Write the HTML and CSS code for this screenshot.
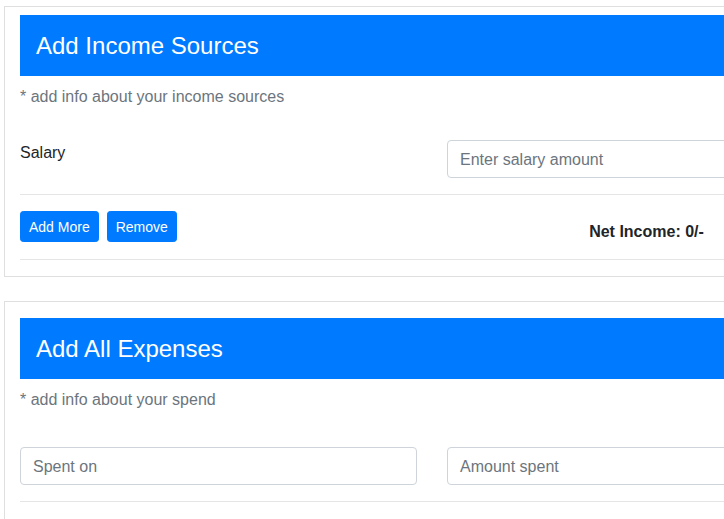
FILE: index.html
```html
<!DOCTYPE html>
<html lang="en">
<head>
<meta charset="utf-8">
<title>Budget</title>
<link rel="stylesheet" href="styles.css">
</head>
<body>
<div class="page">
  <section class="card card-income">
    <h4 class="card-title">Add Income Sources</h4>
    <p class="note">* add info about your income sources</p>
    <div class="row row-income">
      <div class="label">Salary</div>
      <input class="field" type="text" placeholder="Enter salary amount">
    </div>
    <hr class="divider">
    <div class="row">
      <div class="buttons">
        <button class="btn" type="button">Add More</button>
        <button class="btn" type="button">Remove</button>
      </div>
      <div class="net">Net Income: 0/-</div>
    </div>
    <hr class="divider">
  </section>
  <section class="card card-expenses">
    <h4 class="card-title">Add All Expenses</h4>
    <p class="note">* add info about your spend</p>
    <div class="row row-expenses">
      <input class="field" type="text" placeholder="Spent on">
      <input class="field" type="text" placeholder="Amount spent">
    </div>
    <hr class="divider">
  </section>
</div>
</body>
</html>
```
FILE: styles.css
```css
html {
  overflow: hidden;
}
body {
  margin: 0;
  font-family: "Liberation Sans", Arial, sans-serif;
  font-size: 16px;
  line-height: 1.5;
  color: #212529;
  background: #fff;
}
.page {
  padding: 6px 0 0 4px;
  width: 860px;
}
.card {
  box-sizing: border-box;
  width: 856px;
  border: 1px solid rgba(0, 0, 0, 0.125);
  padding: 8px 15px 0;
  margin-bottom: 24px;
}
.card-expenses {
  padding-top: 16px;
  padding-bottom: 24px;
}
.card-title {
  margin: 0 0 8px;
  padding: 17px 16px 15px;
  background: #007bff;
  color: #fff;
  font-size: 24px;
  font-weight: 400;
  line-height: 1.2;
}
.note {
  margin: 0 0 16px;
  padding-top: 1px;
  line-height: 23px;
  color: #6c757d;
}
.row {
  display: grid;
  grid-template-columns: 1fr 1fr;
  column-gap: 30px;
  align-items: start;
}
.row-income {
  padding-top: 16px;
}
.row-expenses {
  padding-top: 20px;
}
.label {
  padding-top: 1px;
}
.field {
  box-sizing: border-box;
  display: block;
  width: 100%;
  height: 38px;
  padding: 7px 12px 5px;
  font-family: inherit;
  font-size: 16px;
  line-height: 1.5;
  color: #495057;
  border: 1px solid #ced4da;
  border-radius: 4px;
  background: #fff;
}
.field::placeholder {
  color: #6c757d;
  opacity: 1;
}
.divider {
  margin: 16px 0;
  border: 0;
  border-top: 1px solid rgba(0, 0, 0, 0.1);
  height: 0;
}
.buttons {
  display: flex;
  gap: 8px;
}
.btn {
  font-family: inherit;
  font-size: 14px;
  line-height: 21px;
  padding: 5px 8px 3px;
  color: #fff;
  background: #007bff;
  border: 1px solid #007bff;
  border-radius: 3.2px;
}
.net {
  margin-top: 9px;
  padding-left: 2px;
  line-height: 23px;
  text-align: center;
  font-weight: 700;
}
```
